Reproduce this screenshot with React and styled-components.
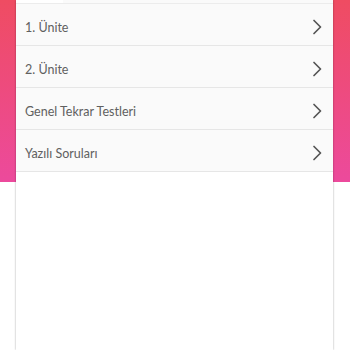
import React from 'react'
import styled, { createGlobalStyle } from 'styled-components'

const GlobalStyle = createGlobalStyle`
  html, body {
    margin: 0;
    padding: 0;
    background: #ffffff;
    font-family: 'Lato', 'Noto Sans', sans-serif;
  }
`

const items = ['1. Ünite', '2. Ünite', 'Genel Tekrar Testleri', 'Yazılı Soruları']

const Chevron = () => (
  <svg width="10" height="16" viewBox="0 0 10 16">
    <polyline points="2,1.5 8.5,8 2,14.5" fill="none" stroke="#555555" strokeWidth="1.7" strokeLinecap="round" strokeLinejoin="round" />
  </svg>
)

export default function App() {
  return (
    <>
      <GlobalStyle />
      <Page>
        <Card>
          <TopStrip>
            <TopTab />
          </TopStrip>
          <List>
            {items.map((item) => (
              <Row key={item}>
                <Label>{item}</Label>
                <Chevron />
              </Row>
            ))}
          </List>
        </Card>
      </Page>
    </>
  )
}

const Page = styled.div`
  height: 350px;
  padding: 0 17px 0 16px;
  background: linear-gradient(180deg, #ef4c62 0px, #ec4a9c 182px, #ffffff 182px);
  display: flex;
  flex-direction: column;
`

const Card = styled.div`
  flex: 1;
  background: #ffffff;
  box-shadow: 0 0 2px rgba(0, 0, 0, 0.35);
  display: flex;
  flex-direction: column;
`

const TopStrip = styled.div`
  height: 4px;
  background: #fafafa;
  border-bottom: 1px solid #ececec;
  box-sizing: border-box;
`

const TopTab = styled.div`
  width: 47px;
  height: 3px;
  background: #ffffff;
`

const List = styled.div`
  display: flex;
  flex-direction: column;
`

const Row = styled.div`
  height: 42px;
  box-sizing: border-box;
  padding: 5px 11px 0 9px;
  background: #fafafa;
  border-bottom: 1px solid #e6e6e6;
  display: flex;
  align-items: center;
  justify-content: space-between;
`

const Label = styled.span`
  font-size: 12.5px;
  font-weight: 400;
  color: #606060;
  letter-spacing: 0;
`
